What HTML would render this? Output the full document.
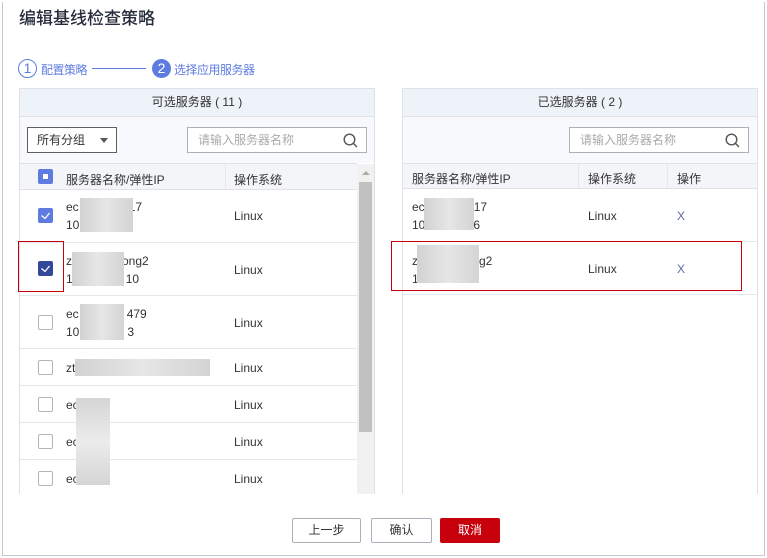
<!DOCTYPE html>
<html><head><meta charset="utf-8"><style>
*{margin:0;padding:0;box-sizing:border-box}
body{width:767px;height:558px;background:#fff;font-family:"Liberation Sans","Noto Sans CJK SC",sans-serif;font-size:12px;color:#333;position:relative;overflow:hidden}
.a{position:absolute}
.frame{left:2px;top:2px;width:763px;height:554px;border:1px solid #c8c8c8;border-top:none}
.title{left:19px;top:4px;font-size:17px;color:#252b3a;font-weight:500}
.panel{border:1px solid #dfe1e6}
.hd{background:#eef2f9;border-bottom:1px solid #dfe1e6;text-align:center;line-height:27px;color:#333}
.flt{background:#f7f9fc}
.th{background:#f3f5f9;border-top:1px solid #dfe1e6;border-bottom:1px solid #dfe1e6}
.row{border-bottom:1px solid #e5e7eb}
.cb{width:15px;height:15px;border:1px solid #b5b5b5;border-radius:2px;background:#fff}
.cbon{background:#5e7ce0;border-color:#5e7ce0}
.cbdark{background:#344899;border-color:#344899}
.blur{background:linear-gradient(90deg,#d2d2d2,#e6e6e6,#d4d4d4)}
.search{height:26px;border:1px solid #adb0b8;background:#fff;color:#aaa;line-height:24px;padding-left:10px}
.btn{height:25px;border:1px solid #adb0b8;border-radius:2px;text-align:center;line-height:23px;background:#fff}
.two{line-height:18px}
</style></head><body>
<div class="a frame"></div>
<div class="a title">编辑基线检查策略</div>

<div class="a" style="left:18px;top:59px;width:19px;height:19px;border:1px solid #5e7ce0;border-radius:50%;color:#5e7ce0;text-align:center;line-height:17px;font-size:14px">1</div>
<div class="a" style="left:41px;top:61px;color:#5e7ce0;letter-spacing:-0.5px">配置策略</div>
<div class="a" style="left:92px;top:68px;width:54px;height:1px;background:#5e7ce0"></div>
<div class="a" style="left:152px;top:59px;width:19px;height:19px;background:#5e7ce0;border-radius:50%;color:#fff;text-align:center;line-height:19px;font-size:14px">2</div>
<div class="a" style="left:174px;top:61px;color:#5e7ce0;letter-spacing:-0.5px">选择应用服务器</div>

<!-- left panel -->
<div class="a panel" style="left:19px;top:88px;width:356px;height:406px;border-bottom:none"></div>
<div class="a hd" style="left:20px;top:89px;width:354px;height:28px">可选服务器 ( 11 )</div>
<div class="a flt" style="left:20px;top:117px;width:354px;height:46px"></div>
<div class="a" style="left:27px;top:127px;width:90px;height:26px;border:1px solid #5f5f5f;background:#fff;line-height:24px;padding-left:9px">所有分组<span class="a" style="left:72px;top:10px;border-left:4px solid transparent;border-right:4px solid transparent;border-top:5px solid #555"></span></div>
<div class="a search" style="left:187px;top:127px;width:180px">请输入服务器名称</div>
<svg class="a" style="left:343px;top:133px" width="15" height="15"><circle cx="6.5" cy="6.5" r="5.3" fill="none" stroke="#555" stroke-width="1.4"/><line x1="10.3" y1="10.3" x2="14" y2="14" stroke="#555" stroke-width="1.4"/></svg>
<div class="a th" style="left:20px;top:163px;width:337px;height:27px"></div>
<div class="a" style="left:225px;top:164px;width:1px;height:25px;background:#e5e7eb"></div>
<div class="a cb cbon" style="left:38px;top:169px"><div class="a" style="left:4px;top:4px;width:5px;height:5px;background:#fff"></div></div>
<div class="a" style="left:66px;top:171px">服务器名称/弹性IP</div>
<div class="a" style="left:234px;top:171px">操作系统</div>
<div class="a" style="left:357px;top:164px;width:17px;height:330px;background:#f1f1f1"></div>
<div class="a" style="left:362px;top:171px;border-left:4px solid transparent;border-right:4px solid transparent;border-bottom:4px solid #aaa"></div>
<div class="a" style="left:359px;top:182px;width:13px;height:250px;background:#c1c1c1"></div>

<div class="a row" style="left:20px;top:190px;width:337px;height:53px"></div>
<div class="a cb cbon" style="left:38px;top:208px"><svg width="13" height="13" class="a" style="left:0;top:0"><path d="M2.5 6.5l3.5 3 4.5-5.5" fill="none" stroke="#fff" stroke-width="1.3"/></svg></div>
<div class="a two" style="left:66px;top:198px">ec<span style="margin-left:50px">17</span><br>10</div>
<div class="a blur" style="left:80px;top:198px;width:53px;height:34px"></div>
<div class="a" style="left:234px;top:209px">Linux</div>

<div class="a row" style="left:20px;top:243px;width:337px;height:53px"></div>
<div class="a cb cbdark" style="left:38px;top:261px"><svg width="13" height="13" class="a" style="left:0;top:0"><path d="M2.5 6.5l3.5 3 4.5-5.5" fill="none" stroke="#fff" stroke-width="1.3"/></svg></div>
<div class="a two" style="left:66px;top:252px">z<span style="margin-left:50px">ong2</span><br>1<span style="margin-left:53px">10</span></div>
<div class="a blur" style="left:72px;top:252px;width:52px;height:34px"></div>
<div class="a" style="left:234px;top:263px">Linux</div>
<div class="a" style="left:18px;top:241px;width:46px;height:51px;border:1px solid #c7000b"></div>

<div class="a row" style="left:20px;top:296px;width:337px;height:53px"></div>
<div class="a cb" style="left:38px;top:315px"></div>
<div class="a two" style="left:66px;top:305px">ec<span style="margin-left:48px">479</span><br>10<span style="margin-left:48px">3</span></div>
<div class="a blur" style="left:80px;top:304px;width:44px;height:36px"></div>
<div class="a" style="left:234px;top:316px">Linux</div>

<div class="a row" style="left:20px;top:349px;width:337px;height:37px"></div>
<div class="a cb" style="left:38px;top:360px"></div>
<div class="a" style="left:66px;top:361px">zt</div>
<div class="a blur" style="left:75px;top:359px;width:135px;height:17px"></div>
<div class="a" style="left:234px;top:361px">Linux</div>

<div class="a row" style="left:20px;top:386px;width:337px;height:37px"></div>
<div class="a cb" style="left:38px;top:397px"></div>
<div class="a" style="left:66px;top:398px">ec</div>
<div class="a" style="left:234px;top:398px">Linux</div>
<div class="a row" style="left:20px;top:423px;width:337px;height:37px"></div>
<div class="a cb" style="left:38px;top:434px"></div>
<div class="a" style="left:66px;top:435px">ec</div>
<div class="a" style="left:234px;top:435px">Linux</div>
<div class="a cb" style="left:38px;top:471px"></div>
<div class="a" style="left:66px;top:472px">ec</div>
<div class="a" style="left:234px;top:472px">Linux</div>
<div class="a blur" style="left:76px;top:398px;width:34px;height:87px;background:linear-gradient(180deg,#d5d5d5,#ececec,#d5d5d5)"></div>

<!-- right panel -->
<div class="a panel" style="left:402px;top:88px;width:356px;height:406px;border-bottom:none"></div>
<div class="a hd" style="left:403px;top:89px;width:354px;height:28px">已选服务器 ( 2 )</div>
<div class="a flt" style="left:403px;top:117px;width:354px;height:46px"></div>
<div class="a search" style="left:569px;top:127px;width:180px">请输入服务器名称</div>
<svg class="a" style="left:725px;top:133px" width="15" height="15"><circle cx="6.5" cy="6.5" r="5.3" fill="none" stroke="#555" stroke-width="1.4"/><line x1="10.3" y1="10.3" x2="14" y2="14" stroke="#555" stroke-width="1.4"/></svg>
<div class="a th" style="left:403px;top:163px;width:354px;height:26px"></div>
<div class="a" style="left:578px;top:164px;width:1px;height:24px;background:#e5e7eb"></div>
<div class="a" style="left:667px;top:164px;width:1px;height:24px;background:#e5e7eb"></div>
<div class="a" style="left:412px;top:170px">服务器名称/弹性IP</div>
<div class="a" style="left:588px;top:170px">操作系统</div>
<div class="a" style="left:677px;top:170px">操作</div>
<div class="a row" style="left:403px;top:189px;width:354px;height:53px"></div>
<div class="a two" style="left:412px;top:198px">ec<span style="margin-left:49px">17</span><br>10<span style="margin-left:48px">6</span></div>
<div class="a blur" style="left:424px;top:198px;width:50px;height:32px"></div>
<div class="a" style="left:588px;top:209px">Linux</div>
<div class="a" style="left:677px;top:209px;color:#5e6aa8">X</div>
<div class="a row" style="left:403px;top:242px;width:354px;height:53px"></div>
<div class="a two" style="left:412px;top:252px">z<span style="margin-left:61px">g2</span><br>1</div>
<div class="a blur" style="left:417px;top:245px;width:62px;height:38px"></div>
<div class="a" style="left:588px;top:262px">Linux</div>
<div class="a" style="left:677px;top:262px;color:#5e6aa8">X</div>
<div class="a" style="left:391px;top:241px;width:351px;height:50px;border:1px solid #c7000b"></div>

<!-- buttons -->
<div class="a btn" style="left:292px;top:518px;width:69px">上一步</div>
<div class="a btn" style="left:371px;top:518px;width:61px">确认</div>
<div class="a btn" style="left:440px;top:518px;width:60px;background:#c7000b;border-color:#c7000b;color:#fff">取消</div>
</body></html>
